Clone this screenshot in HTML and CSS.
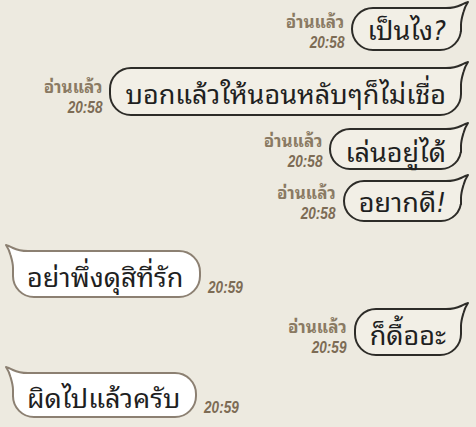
FILE: index.html
```html
<!DOCTYPE html>
<html lang="th">
<head>
<meta charset="utf-8">
<title>Chat</title>
<link rel="stylesheet" href="styles.css">
</head>
<body>
<div class="chat">
  <div class="row me r1">
    <div class="meta"><span class="read">อ่านแล้ว</span><span class="time">20:58</span></div>
    <div class="bubble out h44"><span class="txt">เป็นไง<i class="punct">?</i></span><svg class="tail" viewBox="0 0 30 30" width="30" height="30"><path class="tf" d="M0,7 L6,7 C12,7 17,6 21,4 C24,2.5 26,1.5 28,1 C26,4 24.5,7 23.5,11 C22,16 21,19 21,24 L21,30 L0,30 Z"/><path class="ts" d="M0,7 L6,7 C12,7 17,6 21,4 C24,2.5 26,1.5 28,1 C26,4 24.5,7 23.5,11 C22,16 21,19 21,24 L21,30"/></svg></div>
  </div>
  <div class="row me r2">
    <div class="meta"><span class="read">อ่านแล้ว</span><span class="time">20:58</span></div>
    <div class="bubble out h49"><span class="txt">บอกแล้วให้นอนหลับๆก็ไม่เชื่อ</span><svg class="tail" viewBox="0 0 30 30" width="30" height="30"><path class="tf" d="M0,7 L6,7 C12,7 17,6 21,4 C24,2.5 26,1.5 28,1 C26,4 24.5,7 23.5,11 C22,16 21,19 21,24 L21,30 L0,30 Z"/><path class="ts" d="M0,7 L6,7 C12,7 17,6 21,4 C24,2.5 26,1.5 28,1 C26,4 24.5,7 23.5,11 C22,16 21,19 21,24 L21,30"/></svg></div>
  </div>
  <div class="row me r3">
    <div class="meta"><span class="read">อ่านแล้ว</span><span class="time">20:58</span></div>
    <div class="bubble out h42"><span class="txt">เล่นอยู่ได้</span><svg class="tail" viewBox="0 0 30 30" width="30" height="30"><path class="tf" d="M0,7 L6,7 C12,7 17,6 21,4 C24,2.5 26,1.5 28,1 C26,4 24.5,7 23.5,11 C22,16 21,19 21,24 L21,30 L0,30 Z"/><path class="ts" d="M0,7 L6,7 C12,7 17,6 21,4 C24,2.5 26,1.5 28,1 C26,4 24.5,7 23.5,11 C22,16 21,19 21,24 L21,30"/></svg></div>
  </div>
  <div class="row me r4">
    <div class="meta"><span class="read">อ่านแล้ว</span><span class="time">20:58</span></div>
    <div class="bubble out h42"><span class="txt">อยากดี<i class="punct">!</i></span><svg class="tail" viewBox="0 0 30 30" width="30" height="30"><path class="tf" d="M0,7 L6,7 C12,7 17,6 21,4 C24,2.5 26,1.5 28,1 C26,4 24.5,7 23.5,11 C22,16 21,19 21,24 L21,30 L0,30 Z"/><path class="ts" d="M0,7 L6,7 C12,7 17,6 21,4 C24,2.5 26,1.5 28,1 C26,4 24.5,7 23.5,11 C22,16 21,19 21,24 L21,30"/></svg></div>
  </div>
  <div class="row them r5">
    <div class="bubble in h48"><span class="txt">อย่าพึ่งดุสิที่รัก</span><svg class="tail" viewBox="0 0 30 30" width="30" height="30"><path class="tf" d="M0,7 L6,7 C12,7 17,6 21,4 C24,2.5 26,1.5 28,1 C26,4 24.5,7 23.5,11 C22,16 21,19 21,24 L21,30 L0,30 Z"/><path class="ts" d="M0,7 L6,7 C12,7 17,6 21,4 C24,2.5 26,1.5 28,1 C26,4 24.5,7 23.5,11 C22,16 21,19 21,24 L21,30"/></svg></div>
    <span class="time">20:59</span>
  </div>
  <div class="row me r6">
    <div class="meta"><span class="read">อ่านแล้ว</span><span class="time">20:59</span></div>
    <div class="bubble out h48"><span class="txt">ก็ดื้ออะ</span><svg class="tail" viewBox="0 0 30 30" width="30" height="30"><path class="tf" d="M0,7 L6,7 C12,7 17,6 21,4 C24,2.5 26,1.5 28,1 C26,4 24.5,7 23.5,11 C22,16 21,19 21,24 L21,30 L0,30 Z"/><path class="ts" d="M0,7 L6,7 C12,7 17,6 21,4 C24,2.5 26,1.5 28,1 C26,4 24.5,7 23.5,11 C22,16 21,19 21,24 L21,30"/></svg></div>
  </div>
  <div class="row them r7">
    <div class="bubble in h46"><span class="txt">ผิดไปแล้วครับ</span><svg class="tail" viewBox="0 0 30 30" width="30" height="30"><path class="tf" d="M0,7 L6,7 C12,7 17,6 21,4 C24,2.5 26,1.5 28,1 C26,4 24.5,7 23.5,11 C22,16 21,19 21,24 L21,30 L0,30 Z"/><path class="ts" d="M0,7 L6,7 C12,7 17,6 21,4 C24,2.5 26,1.5 28,1 C26,4 24.5,7 23.5,11 C22,16 21,19 21,24 L21,30"/></svg></div>
    <span class="time">20:59</span>
  </div>
</div>
</body>
</html>
```
FILE: styles.css
```css
html, body {
  margin: 0;
  padding: 0;
}
body {
  width: 476px;
  height: 427px;
  overflow: hidden;
  background: #edeae0;
  font-family: "Noto Sans Thai Looped", "Loma", "Noto Sans Thai", sans-serif;
  color: #1f1f1f;
}
.chat {
  display: flex;
  flex-direction: column;
  padding: 7px 14px 0 12px;
}
.row {
  display: flex;
  align-items: flex-end;
  gap: 7px;
}
.row.me { justify-content: flex-end; }
.row.them { justify-content: flex-start; }
.r2 { margin-top: 16px; }
.r3 { margin-top: 12px; }
.r4 { margin-top: 10px; }
.r5 { margin-top: 28px; }
.r6 { margin-top: 10px; }
.r7 { margin-top: 16px; }
.meta {
  display: flex;
  flex-direction: column;
  align-items: flex-end;
}
.read {
  font-weight: 700;
  font-size: 17px;
  line-height: 22px;
  color: #8a7a63;
}
.time {
  display: inline-block;
  font-family: "Liberation Sans", Arial, sans-serif;
  font-style: italic;
  font-weight: 700;
  font-size: 17px;
  line-height: 19px;
  color: #7d6c55;
  transform: scaleX(0.8);
  transform-origin: right center;
}
.meta .time { margin-top: 1px; margin-bottom: -1px; }
.row.them .time {
  transform-origin: left center;
  padding-bottom: 1px;
}
.bubble {
  position: relative;
  box-sizing: border-box;
  display: flex;
  align-items: center;
  padding: 0 14px;
  border: 2px solid #2d2c28;
  border-radius: 22px;
  white-space: nowrap;
  font-size: 27px;
}
.h42 { height: 42px; }
.h44 { height: 44px; }
.h46 { height: 46px; }
.h48 { height: 48px; }
.h49 { height: 49px; }
.bubble.out {
  background: #f2efe6;
}
.bubble.in {
  background: #ffffff;
  border-color: #8c8072;
  padding: 0 15px 0 13px;
}
.txt {
  position: relative;
  z-index: 2;
  line-height: 1;
}
.punct {
  font-family: "DejaVu Sans Condensed", sans-serif;
}
.tail {
  position: absolute;
  top: -8px;
  z-index: 1;
  overflow: visible;
}
.bubble.out .tail { right: -10px; }
.bubble.in .tail {
  left: -10px;
  transform: scaleX(-1);
}
.tf { stroke: none; }
.ts { fill: none; stroke-width: 2; stroke-linejoin: round; stroke-linecap: round; }
.bubble.out .tf { fill: #f2efe6; }
.bubble.out .ts { stroke: #2d2c28; }
.bubble.in .tf { fill: #ffffff; }
.bubble.in .ts { stroke: #8c8072; }
```
